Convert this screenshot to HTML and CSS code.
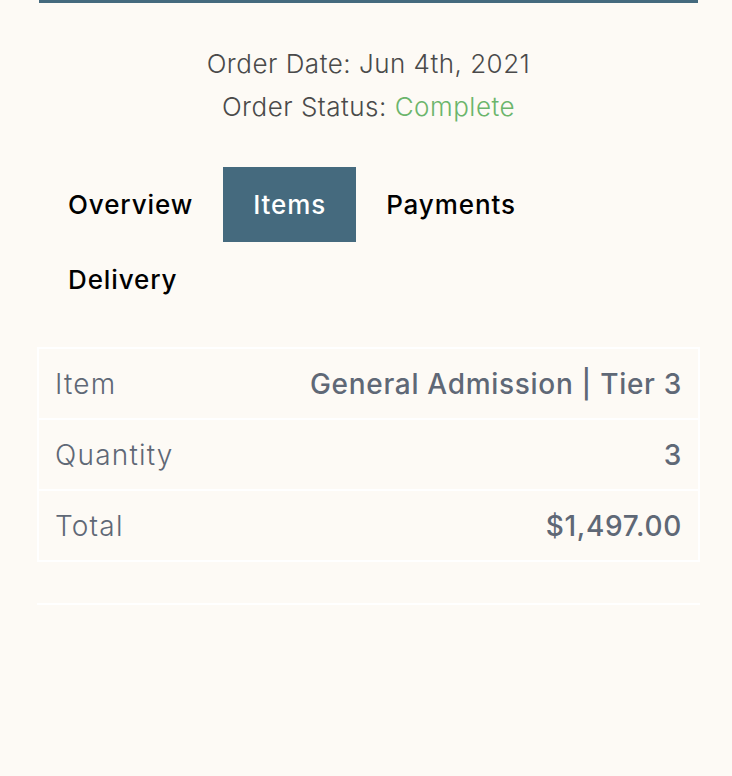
FILE: index.html
```html
<!DOCTYPE html>
<html lang="en">
<head>
<meta charset="utf-8">
<title>Order</title>
<link rel="stylesheet" href="styles.css">
</head>
<body>
<div class="page">
  <div class="topbar"></div>
  <div class="order-info">
    <p class="line">Order Date: Jun 4th, 2021</p>
    <p class="line">Order Status: <span class="status">Complete</span></p>
  </div>
  <nav class="tabs">
    <a class="tab">Overview</a>
    <a class="tab active">Items</a>
    <a class="tab">Payments</a>
    <a class="tab">Delivery</a>
  </nav>
  <div class="card">
    <table class="items">
      <tr><td class="label">Item</td><td class="value">General Admission | Tier 3</td></tr>
      <tr><td class="label">Quantity</td><td class="value">3</td></tr>
      <tr><td class="label">Total</td><td class="value">$1,497.00</td></tr>
    </table>
  </div>
</div>
</body>
</html>
```
FILE: styles.css
```css
html, body {
  margin: 0;
  padding: 0;
  background: #fdfaf5;
}
body {
  font-family: "Inter", "Open Sans", sans-serif;
}
.page {
  padding: 0 32px 0 37px;
}
.topbar {
  height: 3px;
  margin: 0 2px;
  background: #456a7e;
}
.order-info {
  text-align: center;
  padding-top: 39px;
  color: #4a4a4a;
  font-weight: 300;
  font-size: 26px;
  letter-spacing: 0.5px;
}
.line {
  margin: 0;
  line-height: 43px;
}
.status {
  color: #6bb56b;
}
.tabs {
  display: flex;
  flex-wrap: wrap;
  margin-top: 39px;
  padding-left: 1px;
}
.tab {
  display: block;
  height: 75px;
  line-height: 75px;
  padding: 0 30px;
  font-size: 26px;
  font-weight: 500;
  letter-spacing: 0.9px;
  color: #000;
}
.tab.active {
  background: #456a7e;
  color: #fff;
}
.card {
  margin-top: 30px;
  border-bottom: 2px solid #ffffff;
  padding-bottom: 41px;
}
.items {
  width: 100%;
  border-collapse: collapse;
  font-size: 28px;
  color: #5f6876;
}
.items td {
  border: 2px solid #ffffff;
  height: 69px;
  padding: 0 16px;
}
.items td.label {
  font-weight: 300;
  text-align: left;
  letter-spacing: 1.2px;
  border-right: none;
}
.items td.value {
  font-weight: 450;
  text-align: right;
  letter-spacing: 0.7px;
  border-left: none;
}
```
